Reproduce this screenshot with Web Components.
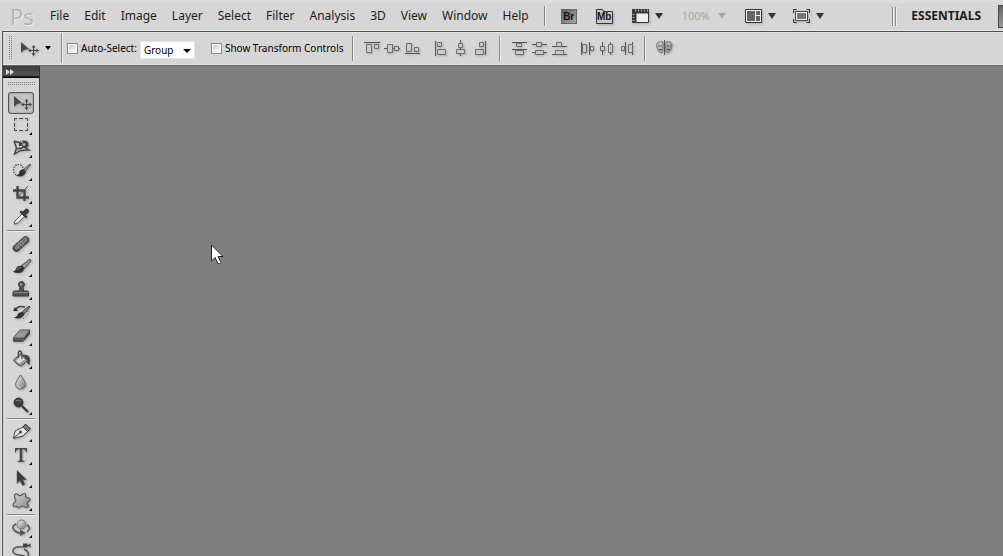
<!DOCTYPE html>
<html lang="en">
<head>
<meta charset="utf-8">
<title>Photoshop</title>
<style>
html,body{margin:0;height:100%;overflow:hidden;background:#d6d6d6}
body{font:12px/16px "Noto Sans","Liberation Sans",sans-serif;color:#1c1c1c}
</style>
</head>
<body>
<ps-app></ps-app>
<script>
const ICONS = {
  // tool panel, 26 x 23 cells
  move: `<path d="M6 5v11l3-3 5-1z" fill="#4a4a4a"/><path d="M18.500 9v9M14 13.500h9" stroke="#444"/><path d="M16.500 10.500l2-2.500 2 2.500zM16.500 16.500l2 2.500 2-2.500zM15.500 11.500L13 13.500l2.500 2zM21.500 11.500l2.500 2-2.500 2z" fill="#444"/>`,
  marquee: `<path d="M6.500 7V4.500h2.500M11 4.500h4M17 4.500h2.500V7M19.500 9v4M19.500 14.500v2H17M15 16.500h-4M9 16.500H6.500v-2.500M6.500 13v-4" fill="none" stroke="#444"/>`,
  lasso: `<path d="M6 4l2.500 7-2 6 6-3.500 8.500-.5-5-3M6 4l7 2M8 12l6-1" fill="none" stroke="#444" stroke-width="1.400"/><path d="M11 9.500V6q1-3 5-2.500 4.500 0 4.500 4t-4.500 3.500l-3-.3v-2.200l3 .2q1.500 0 1.500-1.300t-1.500-1.200l-1.500.3v3z" fill="#444"/><path d="M11.500 9.500h2.500M13 4.500l2 1" stroke="#ddd"/>`,
  quick: `<ellipse cx="10.500" cy="10" rx="5" ry="5.500" fill="none" stroke="#333" stroke-width="1.200" stroke-dasharray="1.300 1.300"/><path d="M22 4l-7 6 1.500 2L22.500 5z" fill="#999" stroke="#555"/><path d="M16 9q-5 .5-5 4.500-1 2-3.500 2 8 3 10.500-3.500z" fill="#333"/>`,
  crop: `<path d="M9.500 3v11.500H21M5 7.500h11.500V18" fill="none" stroke="#444" stroke-width="2.400"/><path d="M9 15L20 3" stroke="#555"/>`,
  eyedrop: `<path d="M6 18l1-3 7-7 2.500 2.500-7.500 7z" fill="#eee" stroke="#555"/><path d="M11.500 6l6.500 6.500 1.500-1.500-1.500-2 3-3q0-3.500-3-3.500l-3 3-2-1z" fill="#383838"/>`,
  heal: `<path d="M8.500 15L17.500 7" stroke="#444" stroke-width="7.500" stroke-linecap="round"/><path d="M8.500 14.500L17.500 6.500" stroke="#777" stroke-width="4.500" stroke-linecap="round"/><path d="M10 9.500l6 5M12.500 8l5 5M9 12.500l3 4" stroke="#ccc" stroke-dasharray="1 1.500"/>`,
  brush: `<path d="M22 3l-9 7 3 3 7-8z" fill="#999" stroke="#444"/><path d="M15 10q-6-1-7 3-1 2-3 2.500 2 2 6 1.500 5-.5 5-5z" fill="#333"/><path d="M9 14q1-2.500 4-2.500" stroke="#888" fill="none"/>`,
  stamp: `<path d="M11.500 12l.5-4a3 3 0 1 1 3 0l.5 4h3.500q1.500 0 1.500 1.500V17H5v-3.500Q5 12 6.500 12z" fill="#555" stroke="#363636"/><path d="M6 13.500h14" stroke="#888"/><circle cx="13" cy="5.500" r="1.200" fill="#999"/>`,
  history: `<path d="M7 8q3-5 10-3" fill="none" stroke="#444" stroke-width="1.500"/><path d="M5 9l5 0-3-4z" fill="#333"/><path d="M21 4l-7 6 2 2 6-7z" fill="#888" stroke="#444"/><path d="M15 10q-5 0-5.500 3-1 2-4 2.500 8 3 11-3.500z" fill="#333"/><path d="M20 9q1 6-6 8" stroke="#555" fill="none" stroke-dasharray="1 2"/>`,
  eraser: `<path d="M12 5h10l-6 8H5z" fill="#999" stroke="#555"/><path d="M5 13h11l-1 4H6q-2-1-1-4z" fill="#555"/><path d="M16 13l6-8v4l-7 8z" fill="#444"/>`,
  bucket: `<path d="M5.500 12l7.500-6.500 6.500 7-6 5.500q-4 0-8-6z" fill="#999" stroke="#444"/><path d="M8 13l5.500-5.500 3 4-5 4z" fill="#ddd"/><path d="M10.500 9.500q-1-7 1.500-6.500t2 8" fill="none" stroke="#444" stroke-width="1.300"/><path d="M14 7q8-1 8 5l-.5 5q-2.500-1-2.500-4t-5-6z" fill="#444"/>`,
  blur: `<path d="M12.500 4q-5 7-5 9.500a5 4.500 0 0 0 10 0q0-2.500-5-9.500z" fill="url(#g)" stroke="#666"/><path d="M9.500 14q0 3 3.500 3" stroke="#ccc" fill="none"/>`,
  dodge: `<circle cx="10.500" cy="8.500" r="4.500" fill="#3d3d3d" stroke="#333"/><path d="M14 12l6 6" stroke="#333" stroke-width="2.200"/><path d="M8 7q2-2 5 0" stroke="#888" fill="none"/>`,
  pen: `<path d="M5.500 17.500L7 10l8-4 4.500 4.500L15 15z" fill="#e4e4e4" stroke="#444"/><path d="M15 6l2.500-3 5 5-3 2.500z" fill="#777" stroke="#333"/><path d="M6 17l6-5.500" stroke="#333"/><circle cx="12.500" cy="11" r="1.500" fill="#444"/>`,
  type: `<path d="M7 4h12v4.500h-.8Q17.800 5.500 16 5.500h-1.700V16q0 1 2.200 1v1H9.500v-1q2.200 0 2.200-1V5.500H10Q8.200 5.500 7.800 8.500H7z" fill="#484848"/>`,
  path: `<path d="M9 3.500v13l3-3 2.500 5 2.500-1.200-2.300-4.600H18.500z" fill="#3a3a3a" stroke="#555" stroke-width=".5"/>`,
  shape: `<path d="M7 4.500q1.500-1.500 4 1 1.500.5 3-1 3-2 3.500 0 .3 2 .5 3 1 .5 3 .5 2 1 .5 2.500-2 2-2.500 2.500.5 1.500 1.500 2.500 0 2.500-2.500 2-2-1-3.500-1.500-1.500.5-3 1.500-2.500.5-2.500-1-1 .5-3 0-1.500-1-.5-3 2-2 2.500-3-2.500-4.500-1-6z" fill="url(#h)" stroke="#5a5a5a" stroke-width="1.200"/>`,
  rotate: `<path d="M8 7q-6 3-1 7 4 3 8 2M19 8q5 3 0 7" fill="none" stroke="#555" stroke-width="1.600"/><path d="M12 12.500l6 3.500-6 3z" fill="#555"/><circle cx="13.500" cy="7.500" r="4.500" fill="url(#g)" stroke="#777"/>`,
  orbit: `<path d="M15 7q-8-1-10 3-1 4 6 5l6 1M16 9q6 3 4 8" fill="none" stroke="#555" stroke-width="1.500"/><path d="M15 3.500h4.500v4H15zM19 5.500l3.500-2v4z" fill="#444"/>`,
  // application bar, 19 x 18 cells
  film: `<path d="M1.500 2.500h16v13h-16z" fill="#eee" stroke="#333"/><path d="M1 2h17v4.500H5.500V16H1z" fill="#3a3a3a"/><path d="M4 3.500h13M2.500 7v8" stroke="#aaa" stroke-width="2" stroke-dasharray="1 2"/>`,
  arrange: `<path d="M1.500 2.500h16v13h-16z" fill="#f2f2f2" stroke="#333"/><path d="M3 4h8v10H3zM12 4h4v4h-4zM12 9h4v5h-4z" fill="#666"/>`,
  screen: `<path d="M1.500 6V2.500h3M14.500 2.500h3V6M17.500 12v3.500h-3M4.500 15.500h-3V12" fill="none" stroke="#333"/><path d="M3.500 4.500h12v9h-12z" fill="#f2f2f2" stroke="#444"/><path d="M5 6h9v6H5z" fill="#777"/>`,
  // alignment, 20 x 18 cells
  atop: `<path d="M2 3.500h16" stroke="#555"/><path d="M4.500 5.500h5v8h-5zM12.500 5.500h4v4h-4z" class="b"/>`,
  avmid: `<path d="M2 9.500h16" stroke="#555"/><path d="M5.500 5.500h5v8h-5zM12.500 7.500h4v4h-4z" class="b"/>`,
  abot: `<path d="M3 14.500h15" stroke="#555"/><path d="M4.500 4.500h5v8h-5zM12.500 8.500h4v4h-4z" class="b"/>`,
  aleft: `<path d="M4.500 2v15" stroke="#555"/><path d="M6.500 3.500h4v4h-4zM6.500 10.500h8v5h-8z" class="b"/>`,
  ahmid: `<path d="M9.500 1v16" stroke="#555"/><path d="M7.500 4.500h4v4h-4zM5.500 10.500h8v4h-8z" class="b"/>`,
  aright: `<path d="M14.500 2v14" stroke="#555"/><path d="M8.500 3.500h4v4h-4zM4.500 10.500h8v5h-8z" class="b"/>`,
  dtop: `<path d="M3 3.500h15M3 10.500h15" stroke="#555"/><path d="M7.500 4.500h5v3h-5zM6.500 11.500h8v4h-8z" class="b"/>`,
  dvmid: `<path d="M3 5.500h15M3 13.500h15" stroke="#555"/><path d="M7.500 3.500h5v4h-5zM6.500 11.500h8v4h-8z" class="b"/>`,
  dbot: `<path d="M3 7.500h15M3 15.500h15" stroke="#555"/><path d="M7.500 3.500h5v4h-5zM6.500 11.500h8v4h-8z" class="b"/>`,
  dleft: `<path d="M4.500 3v13M12.500 3v13" stroke="#555"/><path d="M5.500 5.500h4v8h-4zM13.500 7.500h3v4h-3z" class="b"/>`,
  dhmid: `<path d="M5.500 3v13M13.500 3v13" stroke="#555"/><path d="M3.500 7.500h4v4h-4zM11.500 5.500h4v8h-4z" class="b"/>`,
  dright: `<path d="M8.500 3v13M15.500 3v13" stroke="#555"/><path d="M4.500 7.500h3v4h-3zM11.500 5.500h4v8h-4z" class="b"/>`,
  auto: `<path d="M9 3Q3 1 2.500 7 3 12 7 14l2-2zM12 3q6-2 6 4-.5 5-4.500 7l-2-2z" fill="url(#h)" stroke="#777"/><path d="M4 7h2M7 7h1M13 7h2M16 7h1M5 10.500h3M13 10.500h3" stroke="#444"/><path d="M10.500 1v15" stroke="#555"/>`,
  folder: `<path d="M.5 14.500V.5h6l1 2h9v12z" fill="#c9c9c9" stroke="#333"/>`
};
const SIZES = { film:[19,18], arrange:[19,18], screen:[19,18], folder:[17,15] };
const ALIGN = ['atop','avmid','abot','aleft','ahmid','aright','dtop','dvmid','dbot','dleft','dhmid','dright','auto'];
ALIGN.forEach(n => SIZES[n] = [20,18]);

const define = (name, html, setup) => customElements.define(name, class extends HTMLElement {
  constructor() {
    super();
    this.attachShadow({ mode: 'open' }).innerHTML = html;
  }
  connectedCallback() { if (setup) setup(this, this.shadowRoot); }
});

define('ps-icon', `<style>:host{display:block;flex:none}svg{display:block;filter:drop-shadow(1px 1px 1px #0003)}.b{fill:#cacaca;stroke:#6c6c6c}</style><span></span>`, (el, root) => {
  const n = el.getAttribute('name'), [w, h] = SIZES[n] || [26, 23];
  root.querySelector('span').innerHTML = `<svg width="${w}" height="${h}" aria-hidden="true"><defs><linearGradient id="g" x2="1" y2="1"><stop stop-color="#eee"/><stop offset="1" stop-color="#777"/></linearGradient><linearGradient id="h" x2="1" y2="1"><stop stop-color="#d0d0d0"/><stop offset="1" stop-color="#8c8c8c"/></linearGradient></defs>${ICONS[n]}</svg>`;
});

define('ps-caret', `<style>:host{display:block;flex:none;width:8px;height:6px}svg{display:block;width:100%;height:100%}</style>
<svg viewBox="0 0 8 6" preserveAspectRatio="none" aria-hidden="true"><path d="M0 0h8L4 6z" fill="currentColor"/></svg>`);

define('ps-rule', `<style>:host{display:block;flex:none;width:1px;height:25px;background:#888;border-right:1px solid #eee}</style>`);

define('ps-menu', `<style>:host{display:block}button{all:unset;display:block;font:12px/16px "Noto Sans",sans-serif;cursor:default}</style><button type="button"><slot></slot></button>`);

define('ps-drop', `<style>:host{display:block}button{all:unset;display:flex;align-items:center;gap:5px;font:11px/16px "Noto Sans",sans-serif;color:#333}
:host([muted]) button{color:#a8a8a8;gap:8px}</style>
<button type="button"><slot></slot><ps-caret></ps-caret></button>`, (el, root) => {
  root.querySelector('button').setAttribute('aria-label', el.getAttribute('label'));
});

define('ps-badge', `<style>:host{display:block}button{all:unset;position:relative;display:block;width:17px;height:15px;font:bold 10px/16px "Liberation Sans",sans-serif;text-align:center;color:#111}
ps-icon{position:absolute;inset:0;z-index:-1}button{z-index:0}
:host([dark]) ps-icon{display:none}
:host([dark]) button{width:16px;background:linear-gradient(135deg,#5c5c5c,#aaa);box-shadow:inset 0 0 0 1px #666}</style><button type="button"><ps-icon name="folder"></ps-icon><slot></slot></button>`);

define('ps-menubar', `<style>
:host{display:flex;align-items:center;height:30px;box-sizing:border-box;padding:2px 0 0 10px;background:linear-gradient(#dedede 3px,#d6d6d6 3px)}
.logo{flex:none;font:22px/24px "Open Sans",sans-serif;color:#b2b2b2;text-shadow:1px 1px #eee;width:40px}
nav{display:flex;gap:15px}
.tools{display:flex;align-items:center;flex:none;margin-left:15px}
.tools ps-rule{height:20px}
.right{display:flex;align-items:center;margin-left:auto}
.right ps-rule{height:19px;margin-right:1px}
.space{all:unset;font:bold 12px/16px "Noto Sans",sans-serif;margin:0 17px 0 13px}
.edge{all:unset;width:4px;height:21px;border:1px solid #444;border-right:0;background:linear-gradient(#666,#999)}
</style>
<span class="logo">Ps</span>
<nav aria-label="Main"><ps-menu>File</ps-menu><ps-menu>Edit</ps-menu><ps-menu>Image</ps-menu><ps-menu>Layer</ps-menu><ps-menu>Select</ps-menu><ps-menu>Filter</ps-menu><ps-menu>Analysis</ps-menu><ps-menu>3D</ps-menu><ps-menu>View</ps-menu><ps-menu>Window</ps-menu><ps-menu>Help</ps-menu></nav>
<div class="tools"><ps-rule></ps-rule>
<ps-badge dark style="margin-left:15px">Br</ps-badge><ps-badge style="margin-left:19px">Mb</ps-badge>
<ps-drop label="View extras" style="margin-left:18px"><ps-icon name="film"></ps-icon></ps-drop>
<ps-drop muted label="Zoom level" style="margin-left:19px">100%</ps-drop>
<ps-drop label="Arrange documents" style="margin-left:18px"><ps-icon name="arrange"></ps-icon></ps-drop>
<ps-drop label="Screen mode" style="margin-left:16px"><ps-icon name="screen"></ps-icon></ps-drop></div>
<div class="right"><ps-rule></ps-rule><ps-rule></ps-rule><button class="space" type="button">ESSENTIALS</button><button class="edge" type="button" aria-label="More workspaces"></button></div>`);

define('ps-check', `<style>:host{display:block}label{display:flex;align-items:center;gap:3px;font:10px/14px "Noto Sans",sans-serif;color:#000;white-space:nowrap}
input{appearance:none;flex:none;margin:0;width:11px;height:11px;border:1px solid #8a8a8a;background:linear-gradient(135deg,#ccc,#fff);box-shadow:inset 0 0 0 1px #f6f6f6}</style>
<label><input type="checkbox"><slot></slot></label>`);

define('ps-select', `<style>:host{display:block;position:relative;width:55px;height:18px}
select{appearance:none;box-sizing:border-box;width:100%;height:100%;margin:0;padding:0 0 0 3px;border:1px solid #e6e6ee;border-radius:1px;background:#fff;color:#000;font:10px/16px "Noto Sans",sans-serif}
ps-caret{position:absolute;right:4px;top:8px;height:4px;color:#000;pointer-events:none}</style>
<select aria-label="Auto-select target"><option>Group</option><option>Layer</option></select><ps-caret></ps-caret>`);

define('ps-align', `<style>:host{display:flex}button{all:unset;display:block}</style>`, (el, root) => {
  for (const n of el.getAttribute('icons').split(' ')) {
    const b = document.createElement('button');
    b.type = 'button';
    b.setAttribute('aria-label', n);
    b.innerHTML = `<ps-icon name="${n}"></ps-icon>`;
    root.append(b);
  }
});

define('ps-options', `<style>
:host{display:flex;align-items:center;height:34px;box-sizing:border-box;padding:0 0 2px 5px;background:#d6d6d6;border-top:1px solid #e8e8e8;border-bottom:1px solid #666;box-shadow:inset 0 -1px #e4e4e4}
.grip{width:4px;height:24px;background:conic-gradient(#808080 25%,transparent 0) 0 0/2px 2px}
.current{all:unset;display:flex;align-items:center;margin-left:3px;gap:4px;color:#000}
.current ps-caret{width:6px;height:4px}
.tall{height:30px;margin:0 4px 0 10px}
</style>
<div class="grip"></div>
<button class="current" type="button" aria-label="Move tool"><ps-icon name="move"></ps-icon><ps-caret></ps-caret></button>
<ps-rule class="tall"></ps-rule>
<ps-check>Auto-Select:</ps-check>
<ps-select style="margin:4px 16px 0 3px"></ps-select>
<ps-check>Show Transform Controls</ps-check>
<ps-rule style="margin:0 8px"></ps-rule>
<ps-align icons="atop avmid abot"></ps-align>
<ps-align icons="aleft ahmid aright" style="margin-left:9px"></ps-align>
<ps-rule style="margin:0 8px"></ps-rule>
<ps-align icons="dtop dvmid dbot"></ps-align>
<ps-align icons="dleft dhmid dright" style="margin-left:8px"></ps-align>
<ps-rule style="margin:0 8px 0 7px"></ps-rule>
<ps-align icons="auto"></ps-align>`);

define('ps-tool', `<style>:host{display:block;height:23px}
button{all:unset;display:block;position:relative;width:26px;height:23px}
button::after{content:"";position:absolute;left:21px;top:18px;border-left:3px solid transparent;border-bottom:3px solid #000}
:host([active]) button::after{left:0;top:1px;width:24px;height:20px;border:1px solid #555;border-radius:3px;box-shadow:inset 0 0 2px #777}
:host([active]) button{background:linear-gradient(#c2c2c2,#c8c8c8) 0 1px/26px 22px no-repeat}</style>
<button type="button"></button>`, (el, root) => {
  const n = el.getAttribute('name');
  root.querySelector('button').setAttribute('aria-label', n);
  root.querySelector('button').innerHTML = `<ps-icon name="${n}"></ps-icon>`;
});

define('ps-toolbar', `<style>
:host{display:flex;flex-direction:column;align-items:center;width:36px;overflow:hidden;background:#d6d6d6;border-right:1px solid #333}
header{align-self:stretch;flex:none;height:12px;box-sizing:border-box;border-bottom:1px solid #000;background:linear-gradient(#3c3c3c,#555 9px,#111);padding:3px 0 0 3px}
header svg{display:block}
.grip{flex:none;width:28px;height:4px;margin:4px 0 5px;background:conic-gradient(#808080 25%,transparent 0) 0 0/2px 2px}
hr{flex:none;width:28px;height:1px;border:0;border-bottom:1px solid #eee;background:#888;margin:1px 0}
ps-tool{flex:none}
</style>
<header><svg width="9" height="6" aria-hidden="true"><path d="M0 0l4 3-4 3zM4 0l4 3-4 3z" fill="#ddd"/></svg></header>
<div class="grip"></div>
<ps-tool name="move" active></ps-tool><ps-tool name="marquee"></ps-tool><ps-tool name="lasso"></ps-tool><ps-tool name="quick"></ps-tool><ps-tool name="crop"></ps-tool><ps-tool name="eyedrop"></ps-tool><hr>
<ps-tool name="heal"></ps-tool><ps-tool name="brush"></ps-tool><ps-tool name="stamp"></ps-tool><ps-tool name="history"></ps-tool><ps-tool name="eraser"></ps-tool><ps-tool name="bucket"></ps-tool><ps-tool name="blur"></ps-tool><ps-tool name="dodge"></ps-tool><hr>
<ps-tool name="pen"></ps-tool><ps-tool name="type"></ps-tool><ps-tool name="path"></ps-tool><ps-tool name="shape"></ps-tool><hr>
<ps-tool name="rotate"></ps-tool><ps-tool name="orbit"></ps-tool>`);

define('ps-canvas', `<style>:host{display:block;position:relative;background:#7f7f7f}
svg{position:absolute;left:171px;top:178px}</style>
<svg width="14" height="21" aria-hidden="true"><path d="M.5 1v16l3.500-3.500 3 6q2 1 3-1l-3-6h5z" fill="#fff" stroke="#223"/></svg>`);

define('ps-app', `<style>
:host{display:flex;flex-direction:column;height:100vh;background:#d6d6d6}
.frame{flex:1;min-height:0;display:flex;flex-direction:column;margin-left:2px;border-top:1px solid #4c4c4c;border-left:1px solid #4c4c4c;box-shadow:0 -1px #e8e8e8,-1px 0 #e8e8e8}
.body{flex:1;min-height:0;display:flex}
ps-menubar{margin-bottom:1px}
ps-canvas{flex:1}
</style>
<ps-menubar></ps-menubar>
<div class="frame"><ps-options></ps-options><div class="body"><ps-toolbar></ps-toolbar><ps-canvas></ps-canvas></div></div>`);
</script>
</body>
</html>
